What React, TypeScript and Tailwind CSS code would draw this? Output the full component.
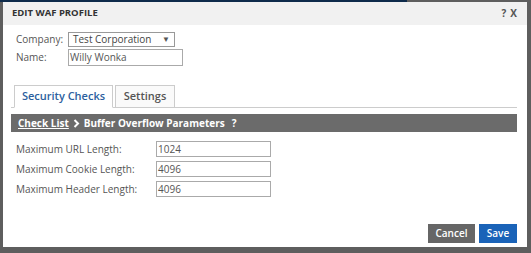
export default function App() {
  const font = { fontFamily: '"Open Sans", "Noto Sans", sans-serif' };
  const fields = [
    { label: 'Maximum URL Length:', value: '1024' },
    { label: 'Maximum Cookie Length:', value: '4096' },
    { label: 'Maximum Header Length:', value: '4096' },
  ];

  return (
    <div className="w-[531px] h-[253px] bg-[#5e5e5e] overflow-hidden" style={font}>
      <div className="h-[2px] w-[407px] bg-[#0e2b4b]" />
      <div className="ml-[3px] w-[524px] h-[245px] bg-white flex flex-col">
        {/* header */}
        <div className="h-[23px] bg-[#f1f1f1] flex items-center justify-between pl-[9px] pr-[10px]">
          <span className="text-[9.5px] font-bold text-[#333]">EDIT WAF PROFILE</span>
          <span className="flex items-center gap-[4px] text-[#555] text-[10px] font-bold">
            <span>?</span>
            <span>X</span>
          </span>
        </div>

        <div className="flex-1 flex flex-col pl-[8px] pr-[10px]">
          {/* company / name */}
          <div className="pl-[5px] pt-[6px] flex flex-col gap-[2px] text-[10px] text-[#555]">
            <div className="flex items-center h-[16px]">
              <span className="w-[52px]">Company:</span>
              <div className="w-[107px] h-[15px] border border-[#999] flex items-center justify-between px-[4px] text-[#444]">
                <span>Test Corporation</span>
                <span className="text-[8px] text-[#555]">▼</span>
              </div>
            </div>
            <div className="flex items-center h-[17px]">
              <span className="w-[52px]">Name:</span>
              <div className="w-[115px] h-[17px] border border-[#aaa] flex items-center px-[1px] text-[#555]">Willy Wonka</div>
            </div>
          </div>

          {/* tabs */}
          <div className="mt-[19px] pl-[3px] flex items-end border-b border-[#ccc] h-[23px]">
            <div className="h-[23px] w-[99px] border border-[#ccc] border-b-white -mb-px bg-white flex items-center justify-center text-[11px] font-semibold text-[#2c5f9e]">
              Security Checks
            </div>
            <div className="ml-[2px] h-[22px] w-[60px] border border-[#ccc] border-b-0 bg-[#fafafa] flex items-center justify-center text-[11px] font-semibold text-[#555]">
              Settings
            </div>
          </div>

          {/* breadcrumb bar */}
          <div className="mt-[6px] h-[18px] bg-[#6b6b6b] flex items-center pl-[7px] text-[10px] font-bold text-white">
            <span className="underline">Check List</span>
            <svg width="7" height="9" viewBox="0 0 7 9" className="ml-[4px] mr-[4px]">
              <path d="M1.5 1 L5 4.5 L1.5 8" stroke="white" strokeWidth="2" fill="none" />
            </svg>
            <span>Buffer Overflow Parameters</span>
            <span className="ml-[7px]">?</span>
          </div>

          {/* fields */}
          <div className="mt-[9px] pl-[5px] flex flex-col gap-[4px] text-[10px] text-[#555]">
            {fields.map((f) => (
              <div key={f.label} className="flex items-center h-[16px]">
                <span className="w-[140px]">{f.label}</span>
                <div className="w-[115px] h-[16px] border border-[#aaa] flex items-center px-[1px] text-[#555]">{f.value}</div>
              </div>
            ))}
          </div>

          {/* buttons */}
          <div className="mt-auto mb-[4px] flex justify-end gap-[4px]">
            <button className="h-[19px] w-[47px] bg-[#666] text-white text-[10px] font-semibold">Cancel</button>
            <button className="h-[19px] w-[38px] bg-[#1a63b8] text-white text-[10px] font-semibold">Save</button>
          </div>
        </div>
      </div>
    </div>
  );
}
